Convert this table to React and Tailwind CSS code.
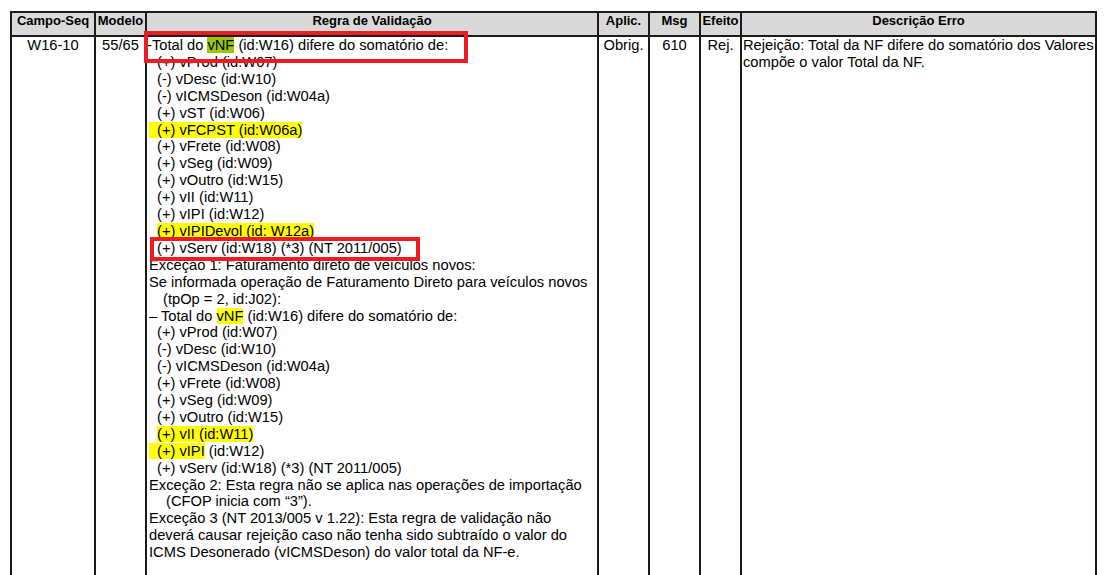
import React from "react";

const font = { fontFamily: '"Liberation Sans", Arial, sans-serif' };

// indent helpers (px from the left of the text column)
const indents = {
  0: "",
  1: "pl-[8px]",
  2: "pl-[14px]",
  3: "pl-[17px]",
};

function L({ i = 0, className = "", children }) {
  return <div className={`whitespace-pre ${indents[i]} ${className}`}>{children}</div>;
}

const Y = ({ className = "", children }) => (
  <span className={`bg-[#ffff00] ${className}`}>{children}</span>
);

function Regra() {
  return (
    <div>
      <L className="-ml-[2px]">
        -Total do <span className="bg-[#9bc800]">vNF</span> (id:W16) difere do somatório de:
      </L>
      <L i={1}>(+) vProd (id:W07)</L>
      <L i={1}>(-) vDesc (id:W10)</L>
      <L i={1}>(-) vICMSDeson (id:W04a)</L>
      <L i={1}>(+) vST (id:W06)</L>
      <L>
        <Y className="pl-[8px]">(+) vFCPST (id:W06a)</Y>
      </L>
      <L i={1}>(+) vFrete (id:W08)</L>
      <L i={1}>(+) vSeg (id:W09)</L>
      <L i={1}>(+) vOutro (id:W15)</L>
      <L i={1}>(+) vII (id:W11)</L>
      <L i={1}>(+) vIPI (id:W12)</L>
      <L i={1}>
        <Y>(+) vIPIDevol (id: W12a)</Y>
      </L>
      <L i={1}>(+) vServ (id:W18) (*3) (NT 2011/005)</L>
      <L>Exceção 1: Faturamento direto de veículos novos:</L>
      <L>Se informada operação de Faturamento Direto para veículos novos</L>
      <L i={2}>(tpOp = 2, id:J02):</L>
      <L>
        – Total do <Y>vNF</Y> (id:W16) difere do somatório de:
      </L>
      <L i={1}>(+) vProd (id:W07)</L>
      <L i={1}>(-) vDesc (id:W10)</L>
      <L i={1}>(-) vICMSDeson (id:W04a)</L>
      <L i={1}>(+) vFrete (id:W08)</L>
      <L i={1}>(+) vSeg (id:W09)</L>
      <L i={1}>(+) vOutro (id:W15)</L>
      <L i={1}>
        <Y>(+) vII (id:W11)</Y>
      </L>
      <L>
        <Y className="pl-[8px]">(+) vIPI</Y> (id:W12)
      </L>
      <L i={1}>(+) vServ (id:W18) (*3) (NT 2011/005)</L>
      <L>Exceção 2: Esta regra não se aplica nas operações de importação</L>
      <L i={3}>(CFOP inicia com “3”).</L>
      <L>Exceção 3 (NT 2013/005 v 1.22): Esta regra de validação não</L>
      <L>deverá causar rejeição caso não tenha sido subtraído o valor do</L>
      <L>ICMS Desonerado (vICMSDeson) do valor total da NF-e.</L>
    </div>
  );
}

const headers = [
  { label: "Campo-Seq" },
  { label: "Modelo" },
  { label: "Regra de Validação" },
  { label: "Aplic." },
  { label: "Msg" },
  { label: "Efeito" },
  { label: "Descrição Erro" },
];

export default function App() {
  return (
    <div className="relative h-[575px] w-[1110px] overflow-hidden bg-white text-black" style={font}>
      <div className="ml-[10px] mt-[11px] w-[1087px] border-l-2 border-t-2 border-[#1c1c1c]">
        <div className="grid grid-cols-[84px_51px_452px_51px_51px_41px_355px]">
          {/* Header */}
          {headers.map((h) => (
            <div
              key={h.label}
              className="h-[24px] whitespace-nowrap border-b-2 border-r-2 border-[#1c1c1c] bg-[#d9d9d9] text-center text-[13px] font-bold leading-[15px]"
            >
              {h.label}
            </div>
          ))}

          {/* Row */}
          <div className="h-[560px] border-r-2 border-[#1c1c1c] text-center text-[14.7px] leading-[16.9px]">
            W16-10
          </div>
          <div className="border-r-2 border-[#1c1c1c] text-center text-[14.7px] leading-[16.9px]">55/65</div>
          <div className="border-r-2 border-[#1c1c1c] pl-[2px] text-[14.7px] leading-[16.9px]">
            <Regra />
          </div>
          <div className="border-r-2 border-[#1c1c1c] text-center text-[14.7px] leading-[16.9px]">Obrig.</div>
          <div className="border-r-2 border-[#1c1c1c] text-center text-[14.7px] leading-[16.9px]">610</div>
          <div className="border-r-2 border-[#1c1c1c] text-center text-[14.7px] leading-[16.9px]">Rej.</div>
          <div className="whitespace-nowrap border-r-2 border-[#1c1c1c] pl-[1px] text-[14.7px] leading-[16.9px]">
            Rejeição: Total da NF difere do somatório dos Valores
            <br />
            compõe o valor Total da NF.
          </div>
        </div>
      </div>

      {/* red annotation boxes */}
      <div className="absolute left-[144px] top-[31px] h-[32px] w-[324px] border-4 border-[#ec1c24]" />
      <div className="absolute left-[150px] top-[237px] h-[24px] w-[270px] border-4 border-[#ec1c24]" />
    </div>
  );
}
